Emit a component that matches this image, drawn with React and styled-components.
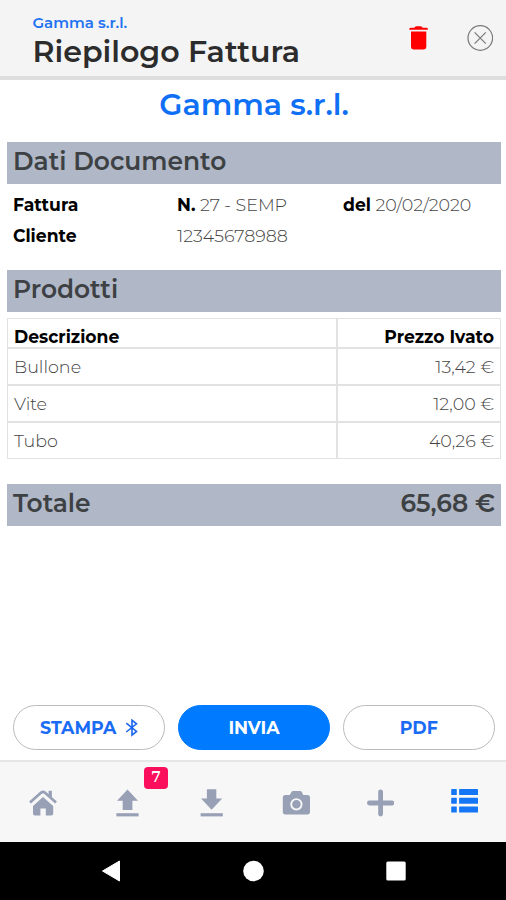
import React from 'react'
import styled, { createGlobalStyle } from 'styled-components'

const products = [
  { name: 'Bullone', price: '13,42 €' },
  { name: 'Vite', price: '12,00 €' },
  { name: 'Tubo', price: '40,26 €' },
]

export default function App() {
  return (
    <Screen>
      <GlobalStyle />

      <Header>
        <Titles>
          <Company>Gamma s.r.l.</Company>
          <Title>Riepilogo Fattura</Title>
        </Titles>
        <HeaderIcons>
          <TrashIcon />
          <CloseIcon />
        </HeaderIcons>
      </Header>

      <Content>
        <Heading>Gamma s.r.l.</Heading>

        <SectionBar>Dati Documento</SectionBar>
        <Details>
          <Label>Fattura</Label>
          <Value><b>N.</b> 27 - SEMP</Value>
          <Value><b>del</b> 20/02/2020</Value>
          <Label>Cliente</Label>
          <Value>12345678988</Value>
        </Details>

        <SectionBar>Prodotti</SectionBar>
        <Table>
          <HeadCell>Descrizione</HeadCell>
          <HeadCell $right>Prezzo Ivato</HeadCell>
          {products.map((p) => (
            <React.Fragment key={p.name}>
              <Cell>{p.name}</Cell>
              <Cell $right>{p.price}</Cell>
            </React.Fragment>
          ))}
        </Table>

        <SectionBar>
          <span>Totale</span>
          <span>65,68 €</span>
        </SectionBar>
      </Content>

      <Actions>
        <Button>
          STAMPA
          <BluetoothIcon />
        </Button>
        <Button $primary>INVIA</Button>
        <Button>PDF</Button>
      </Actions>

      <TabBar>
        <Tab><HomeIcon /></Tab>
        <Tab>
          <UploadIcon />
          <Badge>7</Badge>
        </Tab>
        <Tab><DownloadIcon /></Tab>
        <Tab><CameraIcon /></Tab>
        <Tab><PlusIcon /></Tab>
        <Tab $active><ListIcon /></Tab>
      </TabBar>

      <AndroidBar>
        <svg width="20" height="22" viewBox="0 0 20 22"><path d="M1.5 11 L18.5 1 V21 Z" fill="#fff" stroke="#fff" strokeLinejoin="round" /></svg>
        <svg width="22" height="22" viewBox="0 0 22 22"><circle cx="11.5" cy="11" r="10.3" fill="#fff" /></svg>
        <svg width="20" height="20" viewBox="0 0 20 20"><rect x="0.3" y="0.5" width="19.4" height="19" rx="1.5" fill="#fff" /></svg>
      </AndroidBar>
    </Screen>
  )
}

// ---------- icons ----------

const TrashIcon = () => (
  <svg width="20" height="24" viewBox="0 0 20 24" fill="#ff0000">
    <path d="M0.3 3 Q0.3 1.8 2 1.8 H5.4 Q5.8 0.2 7.2 0.2 H11.8 Q13.2 0.2 13.6 1.8 H17.4 Q18.9 1.8 18.9 3 V3.8 H0.3 Z" />
    <path d="M2 5.6 H17.3 V21 Q17.3 23.4 14.9 23.4 H4.4 Q2 23.4 2 21 Z" />
  </svg>
)

const CloseIcon = () => (
  <svg width="26" height="26" viewBox="0 0 26 26" fill="none" stroke="#777" strokeWidth="1.2">
    <circle cx="13.3" cy="13" r="12.3" />
    <path d="M7.6 7.4 L18.8 18.6 M18.8 7.4 L7.6 18.6" />
  </svg>
)

const BluetoothIcon = () => (
  <svg width="13" height="18" viewBox="0 0 13 18" fill="none" stroke="#1b66ee" strokeWidth="1.6">
    <path d="M1.3 4.2 L11.5 12.4 L7 16 V1.2 L11.5 4.8 L1.3 13" />
  </svg>
)

const HomeIcon = () => (
  <svg width="28" height="28" viewBox="0 0 28 28" fill="currentColor">
    <path d="M1 13.6 L12.2 3.6 Q14 2.2 15.8 3.6 L27 13.6" fill="none" stroke="currentColor" strokeWidth="2.7" />
    <path d="M19.6 1.8 H22.9 V9.6 L19.6 6.7 Z" />
    <path d="M14 7.9 L24.2 17 V24.5 Q24.2 26.4 22.3 26.4 H16.8 V19.6 H11.4 V26.4 H5.9 Q4 26.4 4 24.5 V17 Z" />
  </svg>
)

const UploadIcon = () => (
  <svg width="28" height="28" viewBox="0 0 28 28" fill="currentColor">
    <path d="M14.5 0.6 L25 11.8 H19.4 V20.9 H9.7 V11.8 H4 Z" />
    <rect x="3.4" y="24.2" width="22.2" height="3.2" />
  </svg>
)

const DownloadIcon = () => (
  <svg width="28" height="28" viewBox="0 0 28 28" fill="currentColor">
    <path d="M9.9 0.2 H19.3 V9.6 H25.2 L14.6 20.7 L4 9.6 H9.9 Z" />
    <rect x="3.6" y="24.2" width="22.2" height="3.2" />
  </svg>
)

const CameraIcon = () => (
  <svg width="28" height="28" viewBox="0 0 28 28">
    <path fill="currentColor" d="M3.4 6 H7.8 L9.4 3 Q9.9 2 11.2 2 H18 Q19.3 2 19.8 3 L21.2 6 H25.4 Q28 6 28 8.6 V22.8 Q28 25.4 25.4 25.4 H3.4 Q0.8 25.4 0.8 22.8 V8.6 Q0.8 6 3.4 6 Z" />
    <circle cx="14.4" cy="15.3" r="5.2" fill="none" stroke="#f7f7f7" strokeWidth="1.9" />
  </svg>
)

const PlusIcon = () => (
  <svg width="28" height="28" viewBox="0 0 28 28" fill="none" stroke="currentColor" strokeWidth="4.8" strokeLinecap="round">
    <path d="M14.6 2.8 V25 M3.4 14 H25.8" />
  </svg>
)

const ListIcon = () => (
  <svg width="28" height="28" viewBox="0 0 28 28" fill="currentColor">
    {[0.1, 8.8, 17.5].map((y) => (
      <g key={y}>
        <rect x="1.2" y={y} width="5.6" height="6" rx="0.6" />
        <rect x="9.1" y={y} width="18.9" height="6" rx="0.6" />
      </g>
    ))}
  </svg>
)

// ---------- styles ----------

const GlobalStyle = createGlobalStyle`
  * {
    box-sizing: border-box;
  }
  body {
    margin: 0;
    font-family: Montserrat, Inter, sans-serif;
    background: #fff;
  }
  svg {
    display: block;
    flex: none;
  }
`

const Screen = styled.div`
  display: flex;
  flex-direction: column;
  width: 506px;
  height: 900px;
  overflow: hidden;
  background: #fff;
  white-space: nowrap;
`

const Header = styled.header`
  display: flex;
  justify-content: space-between;
  height: 80px;
  padding: 13px 13px 0 32.5px;
  background: #f4f4f4;
  border-bottom: 4px solid #dedede;
`

const Titles = styled.div`
  display: flex;
  flex-direction: column;
`

const Company = styled.div`
  font-size: 15px;
  line-height: 19px;
  font-weight: 600;
  color: #1f72f2;
`

const Title = styled.h1`
  margin: 0;
  font-size: 30.1px;
  line-height: 40px;
  font-weight: 600;
  color: #2c2c2c;
`

const HeaderIcons = styled.div`
  display: flex;
  align-items: center;
  gap: 38px;
  height: 50px;
`

const Content = styled.main`
  flex: 1;
  padding: 0 5px 0 7px;
`

const Heading = styled.h2`
  margin: 0 0 12px;
  font-size: 30px;
  line-height: 50px;
  font-weight: 600;
  text-align: center;
  color: #0f6ff5;
`

const SectionBar = styled.div`
  display: flex;
  justify-content: space-between;
  height: 41.5px;
  padding: 0 6px;
  font-size: 24.9px;
  line-height: 39px;
  font-weight: 600;
  color: #3d4144;
  background: #b0b7c6;
`

const Details = styled.div`
  display: grid;
  grid-template-columns: 164px 166px auto;
  grid-auto-rows: 31px;
  align-items: baseline;
  height: 86.5px;
  padding: 10px 6px 0;
  font-size: 17.5px;
`

const Label = styled.div`
  font-size: 17.2px;
  font-weight: 700;
  color: #000;
`

const Value = styled.div`
  font-weight: 300;
  color: #444;

  b {
    font-size: 17.2px;
    font-weight: 700;
    color: #000;
  }
`

const Table = styled.div`
  display: grid;
  grid-template-columns: 327.5px auto;
  grid-template-rows: 28px 35px 35px 35px;
  gap: 2px;
  margin: 6.5px 0 25px;
  padding: 1px;
  background: #e2e2e2;
`

const HeadCell = styled.div`
  height: 28px;
  padding: 4px 6px 0;
  font-size: 17.2px;
  line-height: 27px;
  font-weight: 700;
  text-align: ${(p) => (p.$right ? 'right' : 'left')};
  color: #000;
  background: #fff;
`

const Cell = styled.div`
  padding: 0 6px;
  font-size: 17.5px;
  line-height: 35px;
  font-weight: 300;
  text-align: ${(p) => (p.$right ? 'right' : 'left')};
  color: #444;
  background: #fff;
`

const Actions = styled.div`
  display: grid;
  grid-template-columns: repeat(3, 1fr);
  gap: 12.5px;
  height: 55px;
  padding: 0 11px 10px 13px;
`

const Button = styled.button`
  display: flex;
  align-items: center;
  justify-content: center;
  gap: 9px;
  padding: 0;
  border: 1px solid ${(p) => (p.$primary ? '#007aff' : '#b9bcbe')};
  border-radius: 23px;
  font-family: inherit;
  font-size: 17.4px;
  font-weight: 700;
  color: ${(p) => (p.$primary ? '#fff' : '#1b6cf5')};
  background: ${(p) => (p.$primary ? '#007aff' : '#fff')};
`

const TabBar = styled.nav`
  display: grid;
  grid-template-columns: repeat(6, 1fr);
  height: 82px;
  padding: 2px 0 0 1px;
  background: #f7f7f7;
  border-top: 2px solid #e6e6e6;
`

const Tab = styled.div`
  position: relative;
  display: flex;
  align-items: center;
  justify-content: center;
  color: ${(p) => (p.$active ? '#1476f5' : '#97a0b5')};
`

const Badge = styled.span`
  position: absolute;
  top: 3px;
  left: 59px;
  width: 24px;
  height: 22px;
  border-radius: 4px;
  font-family: 'DejaVu Serif', serif;
  font-size: 14.5px;
  line-height: 20px;
  font-weight: 700;
  text-align: center;
  color: #fff;
  background: #fb0f5c;
`

const AndroidBar = styled.div`
  display: grid;
  grid-template-columns: repeat(3, 142.5px);
  justify-content: center;
  justify-items: center;
  align-items: center;
  height: 58px;
  background: #000;
`
